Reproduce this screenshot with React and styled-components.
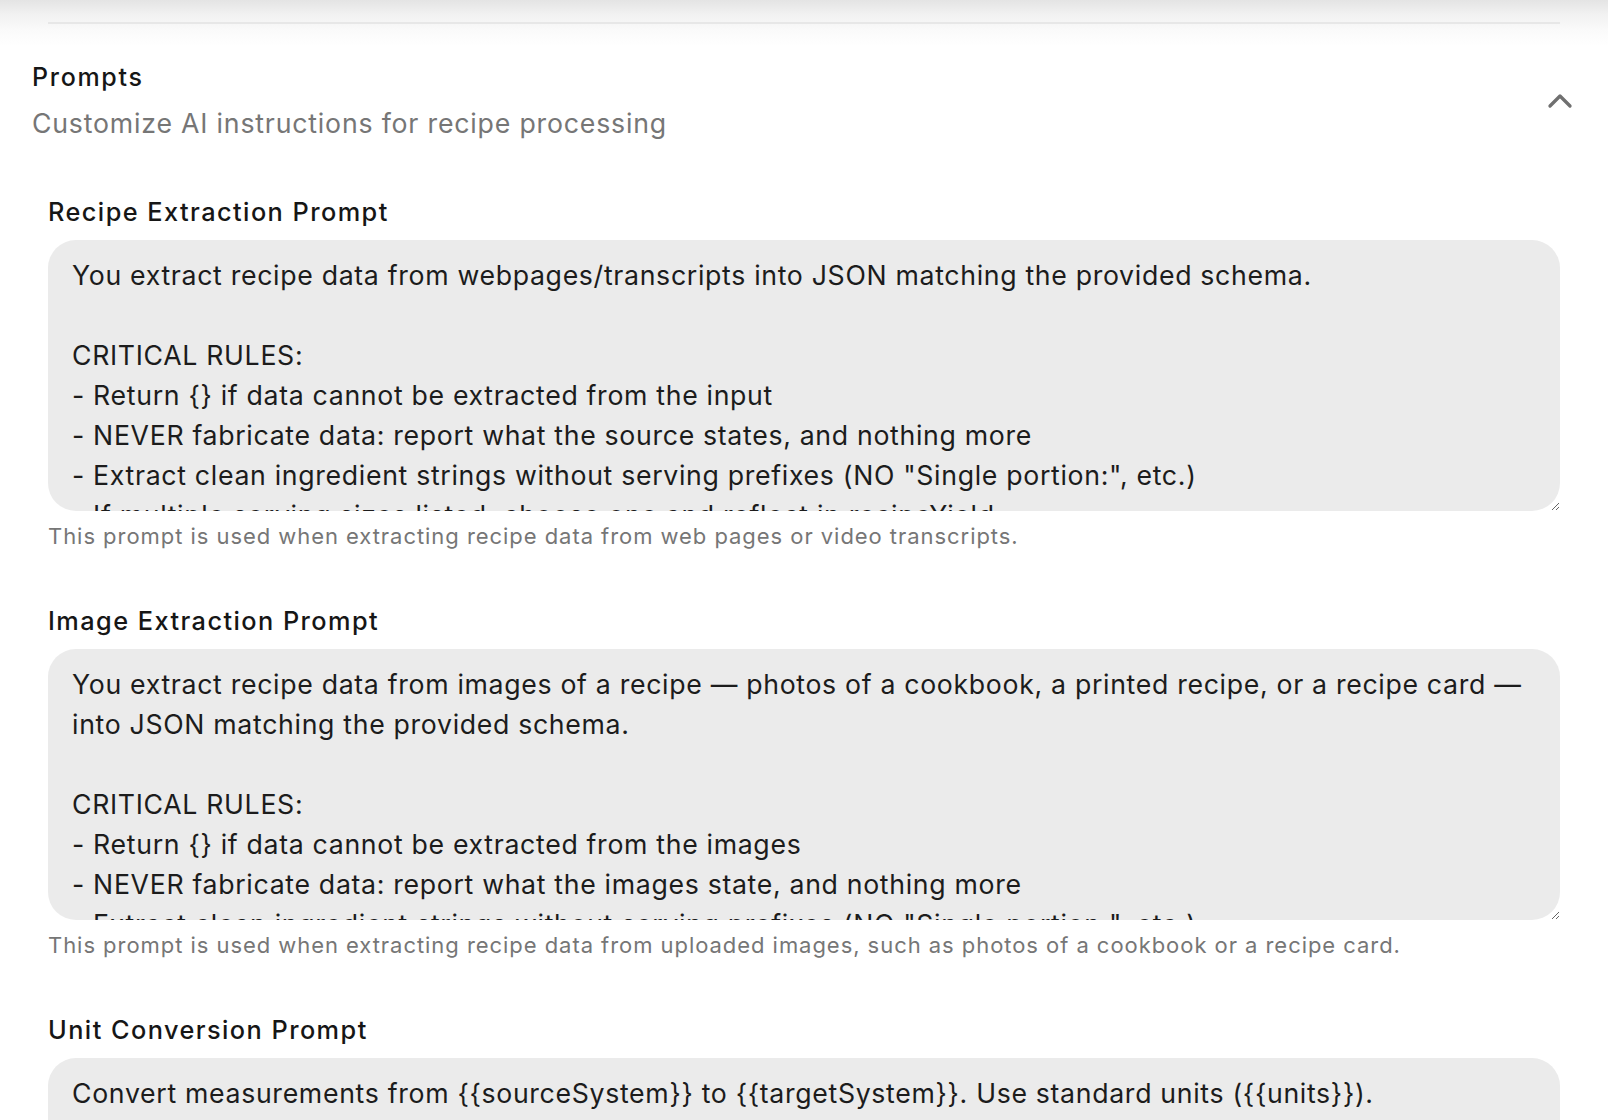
import React from "react";
import styled, { createGlobalStyle } from "styled-components";
import { ChevronUp } from "lucide-react";

const prompts = [
  {
    id: "recipe",
    label: "Recipe Extraction Prompt",
    help: "This prompt is used when extracting recipe data from web pages or video transcripts.",
    value: `You extract recipe data from webpages/transcripts into JSON matching the provided schema.

CRITICAL RULES:
- Return {} if data cannot be extracted from the input
- NEVER fabricate data: report what the source states, and nothing more
- Extract clean ingredient strings without serving prefixes (NO "Single portion:", etc.)
- If multiple serving sizes listed, choose one and reflect in recipeYield
- Keep steps in the original order`,
  },
  {
    id: "image",
    label: "Image Extraction Prompt",
    help: "This prompt is used when extracting recipe data from uploaded images, such as photos of a cookbook or a recipe card.",
    value: `You extract recipe data from images of a recipe — photos of a cookbook, a printed recipe, or a recipe card — into JSON matching the provided schema.

CRITICAL RULES:
- Return {} if data cannot be extracted from the images
- NEVER fabricate data: report what the images state, and nothing more
- Extract clean ingredient strings without serving prefixes (NO "Single portion:", etc.)
- If multiple serving sizes listed, choose one and reflect in recipeYield`,
  },
  {
    id: "units",
    label: "Unit Conversion Prompt",
    help: "This prompt is used when converting ingredient measurements between unit systems.",
    value: `Convert measurements from {{sourceSystem}} to {{targetSystem}}. Use standard units ({{units}}).
Round to practical kitchen amounts.
Keep ingredient names unchanged.`,
  },
];

const GlobalStyle = createGlobalStyle`
  * { box-sizing: border-box; }
  body {
    margin: 0;
    background: #ffffff;
    font-family: Inter, "Noto Sans", sans-serif;
    color: #1c1c1c;
  }
`;

const App = () => {
  return (
    <>
      <GlobalStyle />
      <Page>
        <Divider />
        <Trigger type="button">
          <Heading>
            <Title>Prompts</Title>
            <Description>Customize AI instructions for recipe processing</Description>
          </Heading>
          <ChevronUp size={40} strokeWidth={2} color="#707070" />
        </Trigger>
        <Content>
          {prompts.map((p) => (
            <Field key={p.id}>
              <Label htmlFor={p.id}>{p.label}</Label>
              <PromptArea id={p.id} defaultValue={p.value} spellCheck={false} />
              <Help>{p.help}</Help>
            </Field>
          ))}
        </Content>
      </Page>
    </>
  );
};

const Page = styled.div`
  height: 1120px;
  overflow: hidden;
  padding-top: 22px;
  background: linear-gradient(
    to bottom,
    #e4e4e4 0px,
    #f1f1f1 14px,
    #fafafa 30px,
    #ffffff 46px
  );
`;

const Divider = styled.div`
  margin: 0 48px;
  height: 2px;
  background: #e7e7e7;
`;

const Trigger = styled.button`
  width: 100%;
  display: flex;
  align-items: center;
  justify-content: space-between;
  padding: 35px 28px 0 32px;
  border: none;
  background: transparent;
  text-align: left;
  font-family: inherit;
  cursor: pointer;
  color: inherit;
`;

const Heading = styled.div`
  display: flex;
  flex-direction: column;
  gap: 8px;
`;

const Title = styled.span`
  font-size: 25px;
  line-height: 36px;
  font-weight: 500;
  letter-spacing: 1.7px;
  color: #161616;
`;

const Description = styled.span`
  font-size: 26.7px;
  line-height: 40px;
  letter-spacing: 0.8px;
  color: #767676;
`;

const Content = styled.div`
  display: flex;
  flex-direction: column;
  gap: 52.5px;
  padding: 54px 48px 0;
`;

const Field = styled.div`
  display: flex;
  flex-direction: column;
`;

const Label = styled.label`
  font-size: 25.3px;
  line-height: 30px;
  font-weight: 500;
  letter-spacing: 1.45px;
  color: #161616;
  margin-bottom: 13.4px;
`;

const PromptArea = styled.textarea`
  display: block;
  width: 100%;
  height: 270.5px;
  padding: 14.5px 24px;
  border: none;
  border-radius: 28px;
  background: #ebebeb;
  color: #1c1c1c;
  font-family: Inter, "Noto Sans", sans-serif;
  font-size: 26.7px;
  line-height: 40px;
  letter-spacing: 0.67px;
  resize: vertical;
  outline: none;
  overflow-y: auto;
  scrollbar-width: none;
  &::-webkit-scrollbar {
    display: none;
  }
`;

const Help = styled.p`
  margin: 9.5px 0 0;
  font-size: 22px;
  line-height: 33px;
  letter-spacing: 0.95px;
  color: #767676;
`;

export default App;
